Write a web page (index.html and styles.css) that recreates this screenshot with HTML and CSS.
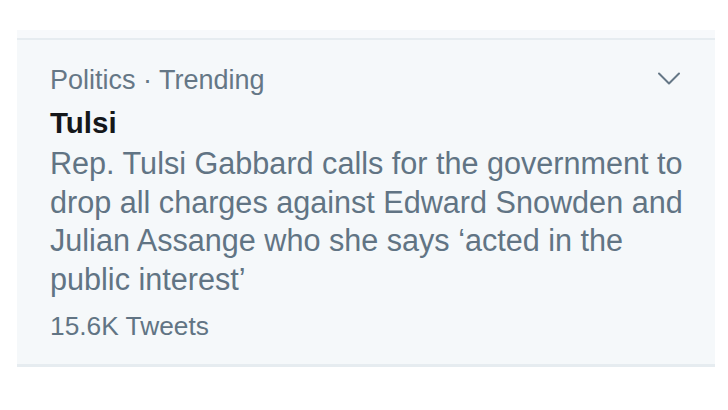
FILE: index.html
```html
<!DOCTYPE html>
<html lang="en">
<head>
<meta charset="utf-8">
<title>Trend</title>
<link rel="stylesheet" href="styles.css">
</head>
<body>
<div class="panel">
  <div class="panel-top"></div>
  <div class="trend">
    <div class="trend-head">
      <span class="category">Politics · Trending</span>
      <svg class="chevron" width="24" height="13" viewBox="0 0 24 13" aria-hidden="true">
        <path d="M2 1.5 L12 11.5 L22 1.5" fill="none" stroke="#657786" stroke-width="2" stroke-linecap="round" stroke-linejoin="round"/>
      </svg>
    </div>
    <div class="title">Tulsi</div>
    <p class="desc">Rep. Tulsi Gabbard calls for the government to drop all charges against Edward Snowden and Julian Assange who she says ‘acted in the public interest’</p>
    <div class="count">15.6K Tweets</div>
  </div>
</div>
</body>
</html>
```

FILE: styles.css
```css
html, body {
  margin: 0;
  padding: 0;
  background: #ffffff;
}
body {
  font-family: "Liberation Sans", Arial, sans-serif;
}
.panel {
  margin: 30px 0 0 17px;
  width: 698px;
  background: #f5f8fa;
}
.panel-top {
  height: 8px;
  background: #f7f9fb;
}
.trend {
  border-top: 2px solid #e6ecf0;
  border-bottom: 3px solid #e6ecf0;
  padding: 24px 20px 22px 33px;
}
.trend-head {
  display: flex;
  justify-content: space-between;
  align-items: center;
}
.category {
  font-size: 27px;
  line-height: 32px;
  color: #657786;
}
.chevron {
  display: block;
  margin: -4px 14px 0 0;
}
.title {
  margin-top: 9px;
  font-size: 29.5px;
  line-height: 36px;
  font-weight: bold;
  color: #14171a;
}
.desc {
  margin: 3px 0 0;
  font-size: 30.6px;
  line-height: 38.5px;
  color: #617484;
}
.count {
  margin-top: 12px;
  font-size: 26.3px;
  line-height: 32px;
  color: #617484;
}
```
